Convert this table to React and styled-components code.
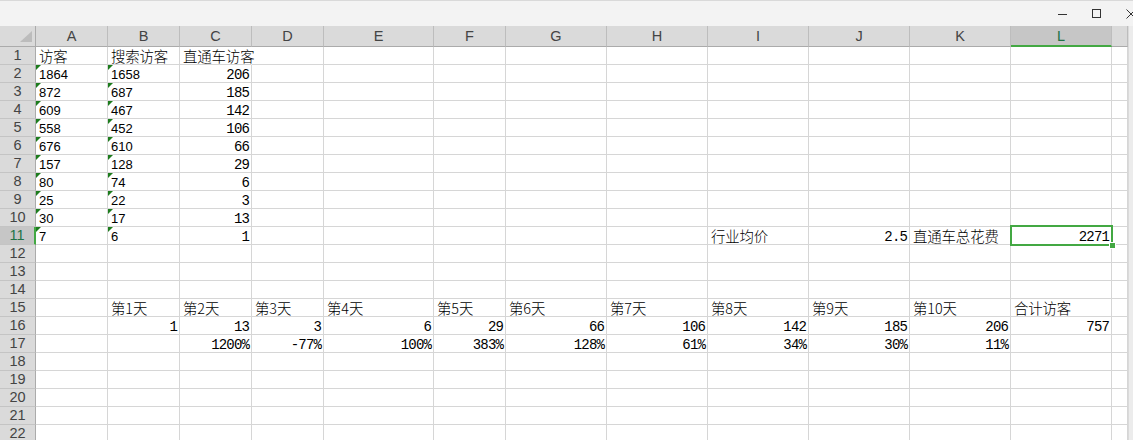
import React from "react";
import styled, { createGlobalStyle, css } from "styled-components";

const GREEN = "#43a843";
const GRID = "#d6d6d6";

const Global = createGlobalStyle`
  html, body { margin: 0; padding: 0; background: #fff; overflow: hidden; }
  body { width: 1133px; height: 440px; font-family: "Liberation Sans", Arial, sans-serif; }
`;

const Window = styled.div`
  width: 1133px;
  height: 440px;
  display: flex;
  flex-direction: column;
  overflow: hidden;
`;

const TitleBar = styled.div`
  height: 25px;
  flex: none;
  background: #f3f3f3;
  border-top: 1px solid #d9d9d9;
  display: flex;
  justify-content: flex-end;
  align-items: stretch;
  margin-right: -15px;
`;

const WinButton = styled.div`
  width: 34px;
  display: flex;
  align-items: center;
  justify-content: center;
  color: #333;
`;

const Body = styled.div`
  flex: 1;
  display: flex;
  min-height: 0;
`;

const Sheet = styled.div`
  flex: 1;
  display: grid;
  grid-template-columns: 36px 72px 72px 72px 72px 110px 72px 101px 101px 101px 101px 101px 101px 1fr;
  grid-template-rows: 21px;
  grid-auto-rows: 18px;
  overflow: hidden;
`;

const ScrollEdge = styled.div`
  width: 4px;
  flex: none;
  background: #ececec;
  border-left: 1px solid #dadada;
`;

const Corner = styled.div`
  background: #dadada;
  border-right: 1px solid #ababab;
  border-bottom: 1px solid #ababab;
  display: flex;
  align-items: flex-end;
  justify-content: flex-end;
  padding: 0 3px 4px 0;
  box-sizing: border-box;
`;

const ColHead = styled.div`
  box-sizing: border-box;
  background: ${(p) => (p.$active ? "#c6c6c6" : "#dadada")};
  border-right: 1px solid #bdbdbd;
  border-bottom: ${(p) => (p.$active ? `2px solid ${GREEN}` : "1px solid #ababab")};
  color: ${(p) => (p.$active ? "#217346" : "#444")};
  font-family: "Liberation Sans", Arial, sans-serif;
  font-size: 14.5px;
  line-height: 20px;
  text-align: center;
`;

const RowHead = styled.div`
  box-sizing: border-box;
  background: ${(p) => (p.$active ? "#c6c6c6" : "#dadada")};
  border-bottom: 1px solid #c4c4c4;
  border-right: ${(p) => (p.$active ? `2px solid ${GREEN}` : "1px solid #ababab")};
  color: ${(p) => (p.$active ? "#217346" : "#444")};
  font-family: "Liberation Sans", Arial, sans-serif;
  font-size: 14.5px;
  line-height: 17px;
  text-align: center;
`;

const kinds = {
  cn: css`
    font-family: "Noto Sans CJK SC", "Noto Sans CJK JP", sans-serif;
    font-weight: 300;
    font-size: 14.4px;
    line-height: 14px;
    padding-top: 2px;
    letter-spacing: -0.1px;
  `,
  num: css`
    font-family: "Liberation Mono", "DejaVu Sans Mono", monospace;
    font-size: 14px;
    line-height: 12px;
    padding-top: 4px;
    letter-spacing: -0.85px;
  `,
  txt: css`
    font-family: "Liberation Sans", Arial, sans-serif;
    font-size: 13px;
    line-height: 12px;
    padding-top: 4px;
  `,
};

const Cell = styled.div`
  position: relative;
  box-sizing: border-box;
  border-right: 1px solid ${(p) => (p.$spill ? "transparent" : GRID)};
  border-bottom: 1px solid ${GRID};
  color: #000;
  white-space: nowrap;
  overflow: visible;
  z-index: ${(p) => (p.$top ? 2 : p.$spill ? 1 : 0)};
  text-align: ${(p) => (p.$right ? "right" : "left")};
  padding-left: 3px;
  padding-right: 2px;
  ${(p) => kinds[p.$kind || "txt"]}
  ${(p) =>
    p.$flag &&
    css`
      &::before {
        content: "";
        position: absolute;
        top: 0;
        left: 0;
        border-top: 5px solid #1d7c1d;
        border-right: 5px solid transparent;
      }
    `}
`;

const Selection = styled.div`
  position: absolute;
  top: -2px;
  left: -1px;
  right: -2px;
  bottom: -2px;
  border: 2px solid ${GREEN};
  pointer-events: none;
  &::after {
    content: "";
    position: absolute;
    right: -5px;
    bottom: -5px;
    width: 5px;
    height: 5px;
    background: ${GREEN};
    border: 1px solid #fff;
  }
`;

const COLS = ["A", "B", "C", "D", "E", "F", "G", "H", "I", "J", "K", "L", ""];

const t = (v) => ({ v, kind: "txt", flag: true });
const n = (v) => ({ v, kind: "num", right: true });
const c = (v) => ({ v, kind: "cn" });

const colA = [1864, 872, 609, 558, 676, 157, 80, 25, 30, 7];
const colB = [1658, 687, 467, 452, 610, 128, 74, 22, 17, 6];
const colC = [206, 185, 142, 106, 66, 29, 6, 3, 13, 1];

function buildRows() {
  const rows = Array.from({ length: 22 }, () => Array(13).fill(null));
  rows[0][0] = c("访客");
  rows[0][1] = c("搜索访客");
  rows[0][2] = { ...c("直通车访客"), spill: true };
  for (let i = 0; i < 10; i++) {
    rows[i + 1][0] = t(String(colA[i]));
    rows[i + 1][1] = t(String(colB[i]));
    rows[i + 1][2] = n(String(colC[i]));
  }
  rows[10][8] = c("行业均价");
  rows[10][9] = n("2.5");
  rows[10][10] = c("直通车总花费");
  rows[10][11] = { ...n("2271"), selected: true };
  const days = ["第1天", "第2天", "第3天", "第4天", "第5天", "第6天", "第7天", "第8天", "第9天", "第10天", "合计访客"];
  const visits = ["1", "13", "3", "6", "29", "66", "106", "142", "185", "206", "757"];
  const growth = ["", "1200%", "-77%", "100%", "383%", "128%", "61%", "34%", "30%", "11%", ""];
  days.forEach((d, i) => {
    rows[14][i + 1] = c(d);
    rows[15][i + 1] = n(visits[i]);
    if (growth[i]) rows[16][i + 1] = n(growth[i]);
  });
  return rows;
}

const ROWS = buildRows();

function CornerMark() {
  return (
    <svg width="12" height="11" viewBox="0 0 12 11">
      <polygon points="12,0 12,11 0,11" fill="#bcbcbc" />
    </svg>
  );
}

export default function App() {
  return (
    <Window>
      <Global />
      <TitleBar>
        <WinButton>
          <svg width="10" height="10" viewBox="0 0 10 10">
            <line x1="0" y1="5.5" x2="9" y2="5.5" stroke="#333" strokeWidth="1" />
          </svg>
        </WinButton>
        <WinButton>
          <svg width="10" height="10" viewBox="0 0 10 10">
            <rect x="0.5" y="0.5" width="8" height="8" fill="none" stroke="#333" strokeWidth="1" />
          </svg>
        </WinButton>
        <WinButton>
          <svg width="10" height="10" viewBox="0 0 10 10">
            <path d="M0.5 0.5 L9.5 9.5 M9.5 0.5 L0.5 9.5" stroke="#333" strokeWidth="1" />
          </svg>
        </WinButton>
      </TitleBar>
      <Body>
        <Sheet>
          <Corner>
            <CornerMark />
          </Corner>
          {COLS.map((col, i) => (
            <ColHead key={"h" + i} $active={col === "L"}>
              {col}
            </ColHead>
          ))}
          {ROWS.map((row, r) => (
            <React.Fragment key={"r" + r}>
              <RowHead $active={r === 10}>{r + 1}</RowHead>
              {row.map((cell, ci) => (
                <Cell
                  key={ci}
                  $kind={cell ? cell.kind : "txt"}
                  $right={cell && cell.right}
                  $flag={cell && cell.flag}
                  $spill={cell && cell.spill}
                  $top={cell && cell.selected}
                >
                  {cell ? cell.v : ""}
                  {cell && cell.selected && <Selection />}
                </Cell>
              ))}
            </React.Fragment>
          ))}
        </Sheet>
        <ScrollEdge />
      </Body>
    </Window>
  );
}
